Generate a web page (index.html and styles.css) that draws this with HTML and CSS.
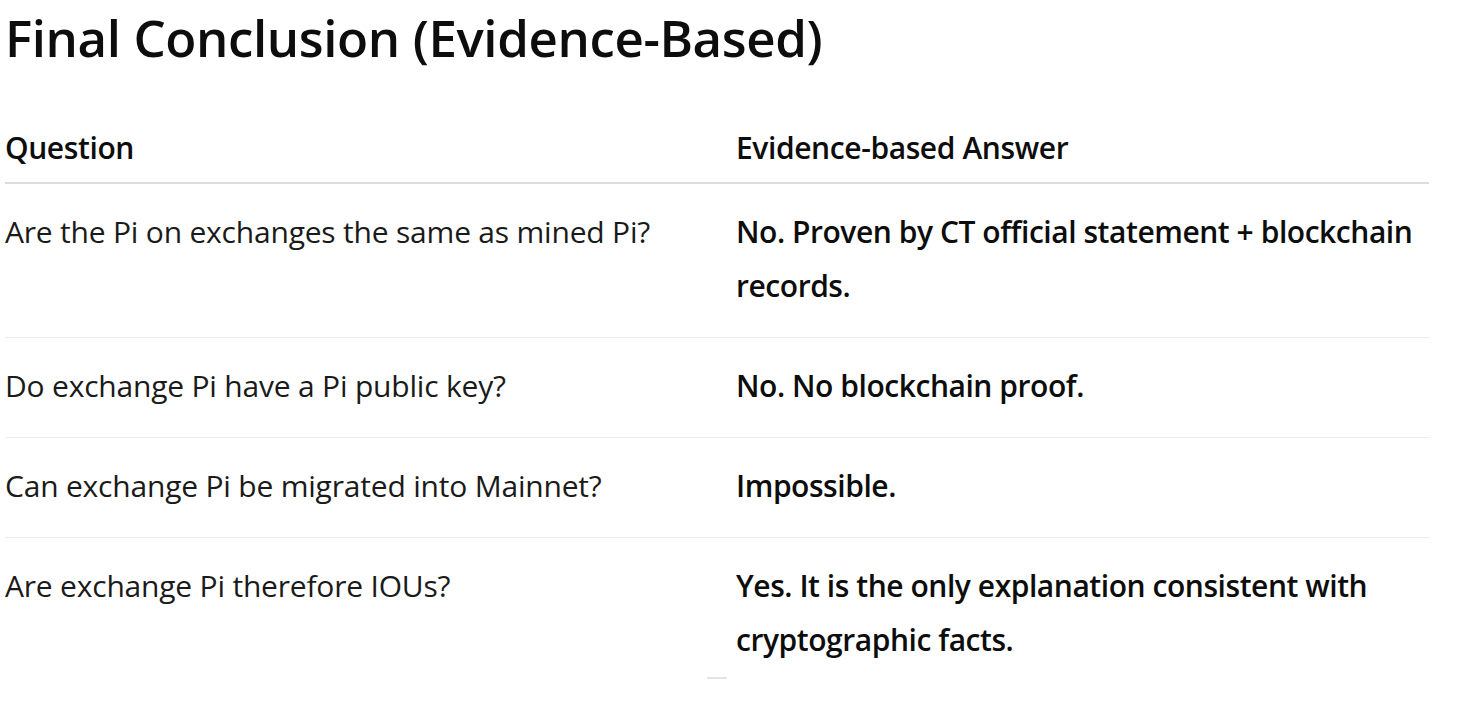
FILE: index.html
```html
<!DOCTYPE html>
<html lang="en">
<head>
<meta charset="utf-8">
<title>Final Conclusion (Evidence-Based)</title>
<link rel="stylesheet" href="styles.css">
</head>
<body>
<main class="page">
  <h2 class="title">Final Conclusion (Evidence-Based)</h2>
  <div class="table-wrap">
    <table class="facts">
      <colgroup>
        <col class="col-q">
        <col class="col-a">
      </colgroup>
      <thead>
        <tr>
          <th>Question</th>
          <th>Evidence-based Answer</th>
        </tr>
      </thead>
      <tbody>
        <tr>
          <td>Are the Pi on exchanges the same as mined Pi?</td>
          <td><strong>No. Proven by CT official statement + blockchain records.</strong></td>
        </tr>
        <tr>
          <td>Do exchange Pi have a Pi public key?</td>
          <td><strong>No. No blockchain proof.</strong></td>
        </tr>
        <tr>
          <td>Can exchange Pi be migrated into Mainnet?</td>
          <td><strong>Impossible.</strong></td>
        </tr>
        <tr>
          <td>Are exchange Pi therefore IOUs?</td>
          <td><strong>Yes. It is the only explanation consistent with cryptographic facts.</strong></td>
        </tr>
      </tbody>
    </table>
    <span class="scroll-hint"></span>
  </div>
</main>
</body>
</html>
```

FILE: styles.css
```css
html, body {
  margin: 0;
  padding: 0;
  background: #ffffff;
}

body {
  font-family: "Open Sans", "Noto Sans", sans-serif;
  color: #0d0d0d;
}

.page {
  padding: 0 32px 0 5px;
}

.title {
  margin: 0;
  padding-top: 7px;
  font-size: 51px;
  line-height: 60px;
  font-weight: 600;
  letter-spacing: -0.4px;
}

.table-wrap {
  position: relative;
  margin-top: 54px;
  width: 1424px;
}

.facts {
  width: 100%;
  border-collapse: collapse;
  table-layout: fixed;
  font-size: 30px;
}

.col-q { width: 731px; }

.facts th,
.facts td {
  text-align: left;
  vertical-align: top;
  padding: 0;
}

.facts th {
  font-weight: 600;
  line-height: 54px;
  padding-bottom: 7px;
  letter-spacing: -0.4px;
  border-bottom: 2px solid #dcdcdc;
}

.facts td {
  font-weight: 400;
  line-height: 54px;
  padding-top: 21px;
  padding-bottom: 24px;
  letter-spacing: -0.2px;
  color: #1a1a1a;
}

.facts tbody tr + tr td {
  border-top: 1px solid #ececec;
}

.facts td strong {
  font-weight: 600;
  color: #0d0d0d;
  letter-spacing: -0.45px;
}

.scroll-hint {
  position: absolute;
  left: 702px;
  bottom: 12px;
  width: 20px;
  height: 2px;
  background: #e3e3e3;
  border-radius: 1px;
}
```
